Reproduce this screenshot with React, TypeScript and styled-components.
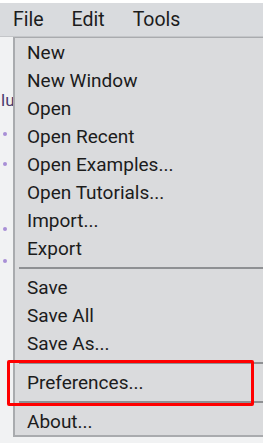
import React from "react";
import styled, { createGlobalStyle } from "styled-components";

const Global = createGlobalStyle`
  html, body { margin: 0; padding: 0; background: #ffffff; }
  body { font-family: Roboto, "Noto Sans", sans-serif; width: 263px; height: 443px; overflow: hidden; }
`;

const Page = styled.div`
  width: 263px;
  height: 443px;
  display: flex;
  flex-direction: column;
  background: #ffffff;
  padding-top: 3px;
  box-sizing: border-box;
  position: relative;
`;

const MenuBar = styled.div`
  height: 34px;
  flex: none;
  background: #d9dbde;
  border-bottom: 1px solid #c4c6c9;
  display: flex;
  align-items: center;
  padding-left: 13px;
  gap: 28px;
  font-size: 19.5px;
  color: #1c1c1c;
  box-sizing: border-box;
`;

const BarItem = styled.span`
  line-height: 1;
`;

const Body = styled.div`
  flex: 1;
  display: flex;
  background: #f1f2f3;
  position: relative;
`;

const Gutter = styled.div`
  width: 13px;
  flex: none;
  position: relative;
  overflow: hidden;
`;

const GutterText = styled.span`
  position: absolute;
  left: 1px;
  top: 53px;
  font-size: 17px;
  color: #4a3c6e;
`;

const Dot = styled.span<{ $top: number }>`
  position: absolute;
  left: 3px;
  top: ${(p) => p.$top}px;
  width: 4px;
  height: 4px;
  border-radius: 50%;
  background: #a88fd6;
`;

const Dropdown = styled.div`
  flex: 1;
  align-self: flex-start;
  background: #dadbdd;
  border-left: 2px solid #a9abae;
  border-top: 1px solid #a9abae;
  border-bottom: 2px solid #a9abae;
  display: flex;
  flex-direction: column;
  box-sizing: border-box;
`;

const Item = styled.div`
  height: 28px;
  display: flex;
  align-items: center;
  padding-left: 12px;
  font-size: 19px;
  color: #1c1c1c;
  white-space: nowrap;
`;

const Sep = styled.div`
  height: 11px;
  display: flex;
  align-items: center;
  padding-left: 4px;
  &::after {
    content: "";
    flex: 1;
    height: 2px;
    background: #8e9093;
  }
`;

const Highlight = styled.div`
  position: absolute;
  left: 7px;
  top: 360px;
  width: 247px;
  height: 46px;
  border: 3px solid #ff0000;
  border-radius: 2px;
  box-sizing: border-box;
  pointer-events: none;
`;

const group1 = ["New", "New Window", "Open", "Open Recent", "Open Examples...", "Open Tutorials...", "Import...", "Export"];
const group2 = ["Save", "Save All", "Save As..."];

export default function App() {
  return (
    <Page>
      <Global />
      <MenuBar>
        <BarItem>File</BarItem>
        <BarItem>Edit</BarItem>
        <BarItem>Tools</BarItem>
      </MenuBar>
      <Body>
        <Gutter>
          <GutterText>lu</GutterText>
          <Dot $top={95} />
          <Dot $top={125} />
          <Dot $top={190} />
          <Dot $top={222} />
        </Gutter>
        <Dropdown>
          {group1.map((t) => (
            <Item key={t}>{t}</Item>
          ))}
          <Sep />
          {group2.map((t) => (
            <Item key={t}>{t}</Item>
          ))}
          <Sep />
          <Item>Preferences...</Item>
          <Sep />
          <Item>About...</Item>
        </Dropdown>
      </Body>
      <Highlight />
    </Page>
  );
}
